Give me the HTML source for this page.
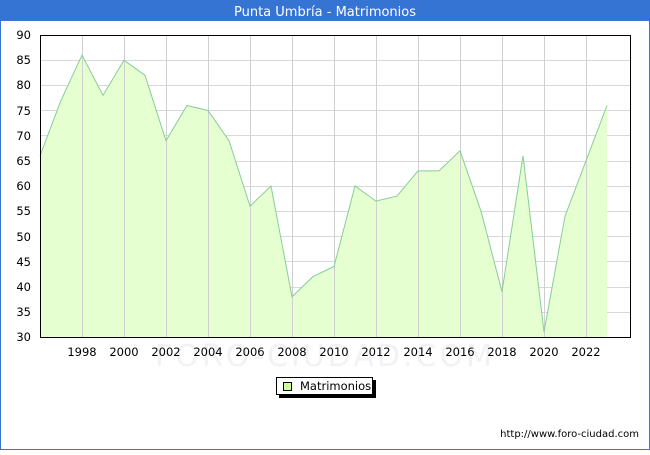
<!DOCTYPE html>
<html><head><meta charset="utf-8"><style>
html,body{margin:0;padding:0;background:#fff;}
body{width:650px;height:450px;overflow:hidden;}
text{font-family:"DejaVu Sans","Liberation Sans",sans-serif;}
</style></head><body>
<svg width="650" height="450" xmlns="http://www.w3.org/2000/svg">
<rect x="0.5" y="0.5" width="649" height="449" fill="#fff" stroke="#3674d4"/>
<rect x="0" y="0" width="650" height="21" fill="#3674d4"/>
<text x="325" y="16" font-size="13" fill="#fff" text-anchor="middle">Punta Umbría - Matrimonios</text>
<text x="325" y="366" font-size="30" fill="#f2f2f6" text-anchor="middle" letter-spacing="3">FORO-CIUDAD.COM</text>
<g stroke="#d8d8d8" stroke-width="1">
<line x1="40" y1="60.5" x2="630" y2="60.5"/><line x1="40" y1="85.5" x2="630" y2="85.5"/>
<line x1="40" y1="110.5" x2="630" y2="110.5"/><line x1="40" y1="135.5" x2="630" y2="135.5"/>
<line x1="40" y1="161.5" x2="630" y2="161.5"/><line x1="40" y1="186.5" x2="630" y2="186.5"/>
<line x1="40" y1="211.5" x2="630" y2="211.5"/><line x1="40" y1="236.5" x2="630" y2="236.5"/>
<line x1="40" y1="261.5" x2="630" y2="261.5"/><line x1="40" y1="287.5" x2="630" y2="287.5"/>
<line x1="40" y1="312.5" x2="630" y2="312.5"/>
</g>
<polygon fill="#e6ffd0" stroke="none" points="40,337 40,155.8 61,100.4 82,55.1 103,95.4 124,60.2 145,75.3 166,140.7 187,105.5 208,110.5 229,140.7 250,206.1 271,186 292,296.7 313,276.6 334,266.5 355,186 376,201.1 397,196.1 418,170.9 439,170.9 460,150.8 481,211.2 502,291.7 523,155.8 544,332 565,216.2 586,160.8 607,105.5 607,337"/>
<g stroke="#cfcfcf" stroke-width="1">
<line x1="82.5" y1="35" x2="82.5" y2="337"/><line x1="124.5" y1="35" x2="124.5" y2="337"/>
<line x1="166.5" y1="35" x2="166.5" y2="337"/><line x1="208.5" y1="35" x2="208.5" y2="337"/>
<line x1="250.5" y1="35" x2="250.5" y2="337"/><line x1="292.5" y1="35" x2="292.5" y2="337"/>
<line x1="334.5" y1="35" x2="334.5" y2="337"/><line x1="376.5" y1="35" x2="376.5" y2="337"/>
<line x1="418.5" y1="35" x2="418.5" y2="337"/><line x1="460.5" y1="35" x2="460.5" y2="337"/>
<line x1="502.5" y1="35" x2="502.5" y2="337"/><line x1="544.5" y1="35" x2="544.5" y2="337"/>
<line x1="586.5" y1="35" x2="586.5" y2="337"/>
</g>
<polyline fill="none" stroke="#88cc99" stroke-width="1" points="40,155.8 61,100.4 82,55.1 103,95.4 124,60.2 145,75.3 166,140.7 187,105.5 208,110.5 229,140.7 250,206.1 271,186 292,296.7 313,276.6 334,266.5 355,186 376,201.1 397,196.1 418,170.9 439,170.9 460,150.8 481,211.2 502,291.7 523,155.8 544,332 565,216.2 586,160.8 607,105.5"/>
<rect x="40.5" y="35.5" width="590" height="302" fill="none" stroke="#000"/>
<g font-size="11.5" fill="#000" text-anchor="end">
<text x="31" y="39">90</text><text x="31" y="64">85</text><text x="31" y="89">80</text>
<text x="31" y="115">75</text><text x="31" y="140">70</text><text x="31" y="165">65</text>
<text x="31" y="190">60</text><text x="31" y="215">55</text><text x="31" y="241">50</text>
<text x="31" y="266">45</text><text x="31" y="291">40</text><text x="31" y="316">35</text>
<text x="31" y="341">30</text>
</g>
<g font-size="11.5" fill="#000" text-anchor="middle">
<text x="82" y="356">1998</text><text x="124" y="356">2000</text><text x="166" y="356">2002</text>
<text x="208" y="356">2004</text><text x="250" y="356">2006</text><text x="292" y="356">2008</text>
<text x="334" y="356">2010</text><text x="376" y="356">2012</text><text x="418" y="356">2014</text>
<text x="460" y="356">2016</text><text x="502" y="356">2018</text><text x="544" y="356">2020</text>
<text x="586" y="356">2022</text>
</g>
<rect x="279" y="380" width="97" height="18" fill="#000"/>
<rect x="276.5" y="377.5" width="96" height="17" fill="#fff" stroke="#000"/>
<rect x="283.5" y="382.5" width="8" height="8" fill="#ccff99" stroke="#000"/>
<text x="300" y="390" font-size="11.5" fill="#000">Matrimonios</text>
<text x="639" y="437" font-size="10" fill="#000" text-anchor="end">http://www.foro-ciudad.com</text>
</svg>
</body></html>
